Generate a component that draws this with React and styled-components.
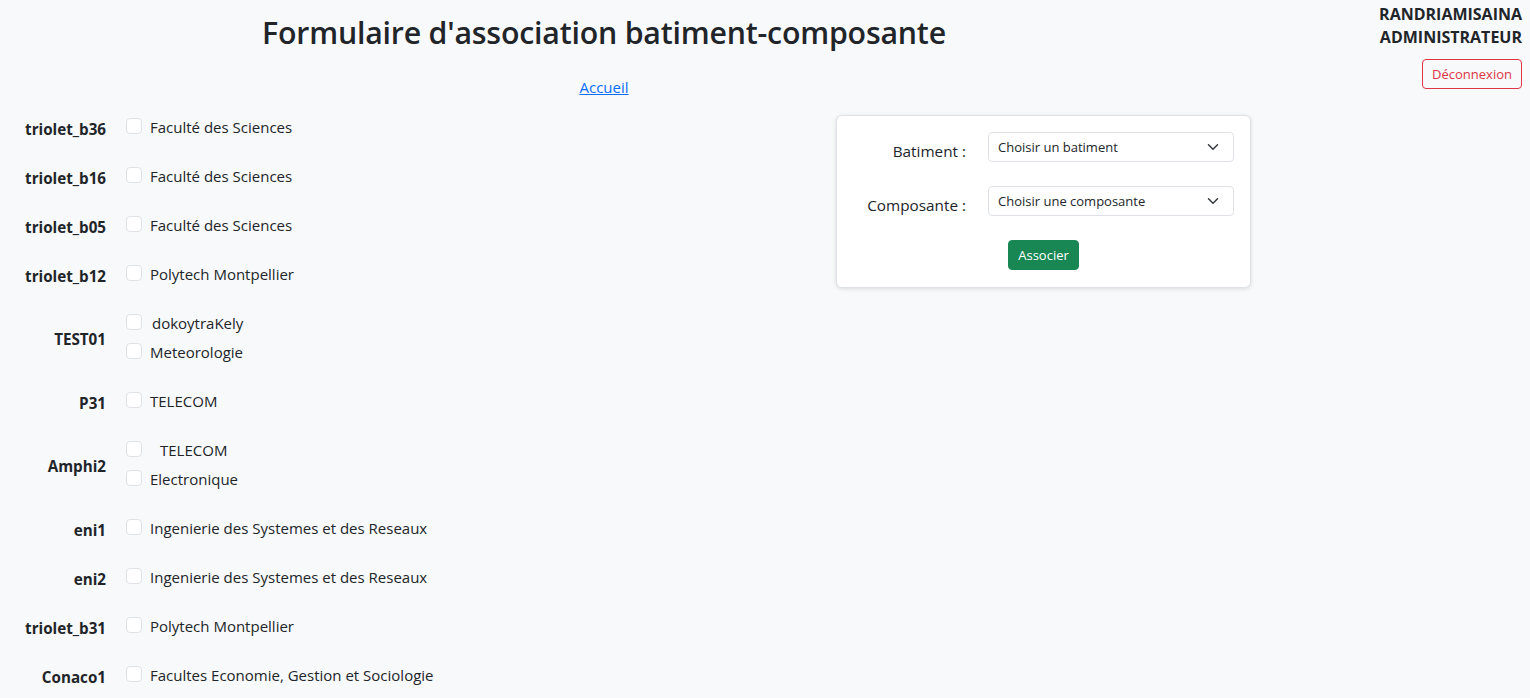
import React from "react";
import styled, { createGlobalStyle } from "styled-components";

const GlobalStyle = createGlobalStyle`
  body {
    margin: 0;
    background: #f8f9fa;
    font-family: "Open Sans", "Noto Sans", sans-serif;
    color: #212529;
  }
`;

const Page = styled.div`
  display: flex;
  width: 1530px;
  min-height: 698px;
`;

const Main = styled.div`
  width: 1208px;
  flex: none;
  display: flex;
  flex-direction: column;
`;

const Title = styled.h2`
  margin: 14px 0 0;
  text-align: center;
  font-size: 30.3px;
  font-weight: 600;
  line-height: 38px;
  letter-spacing: -0.2px;
`;

const HomeLink = styled.a`
  display: block;
  margin-top: 25px;
  text-align: center;
  font-size: 15px;
  color: #0d6efd;
  text-decoration: underline;
`;

const Content = styled.div`
  display: flex;
  margin-top: 15px;
`;

const List = styled.div`
  width: 836px;
  flex: none;
  display: flex;
  flex-direction: column;
  gap: 20px;
`;

const Group = styled.div`
  display: flex;
  align-items: center;
`;

const GroupName = styled.div`
  width: 106px;
  text-align: right;
  font-weight: 700;
  font-size: 15.2px;
  padding-top: 4px;
`;

const Items = styled.div`
  display: flex;
  flex-direction: column;
  margin-left: 20px;
`;

const Item = styled.label`
  display: flex;
  align-items: center;
  height: 29px;
  font-size: 15px;
  gap: ${(p) => p.$gap || 8}px;
`;

const Box = styled.span`
  width: 16px;
  height: 16px;
  flex: none;
  box-sizing: border-box;
  border: 1px solid #dee2e6;
  border-radius: 4px;
  background: #fff;
  margin-top: -2px;
`;

const Card = styled.div`
  width: 415px;
  height: 173px;
  flex: none;
  margin-top: 3px;
  box-sizing: border-box;
  background: #fff;
  border: 1px solid #dee2e6;
  border-radius: 6px;
  box-shadow: 0 1px 4px rgba(0, 0, 0, 0.12);
  padding: 16px 16px 16px 0;
  display: flex;
  flex-direction: column;
  align-items: center;
  gap: 24px;
`;

const Field = styled.div`
  display: flex;
  align-items: center;
  width: 100%;
`;

const FieldLabel = styled.div`
  width: 129px;
  text-align: right;
  font-size: 15.3px;
  padding-top: 8px;
`;

const Select = styled.div`
  margin-left: 22px;
  flex: 1;
  height: 30px;
  box-sizing: border-box;
  border: 1px solid #dee2e6;
  border-radius: 4px;
  background: #fff;
  display: flex;
  align-items: center;
  justify-content: space-between;
  padding: 0 14px 0 9px;
  font-size: 13px;
`;

const Button = styled.button`
  font-family: inherit;
  font-size: 13px;
  border-radius: 4px;
  cursor: pointer;
  height: 30px;
  padding: 0 9px;
  ${(p) =>
    p.$danger
      ? `background: transparent; color: #dc3545; border: 1px solid #dc3545;`
      : `background: #198754; color: #fff; border: 1px solid #198754;`}
`;

const SubmitButton = styled(Button)`
  margin-left: 16px;
`;

const Aside = styled.div`
  flex: 1;
  display: flex;
  flex-direction: column;
  align-items: flex-end;
  padding: 3px 8px 0 0;
`;

const UserLine = styled.div`
  font-weight: 700;
  font-size: 16px;
  line-height: 23px;
`;

const LogoutButton = styled(Button)`
  margin-top: 10px;
`;

const Chevron = () => (
  <svg width="12" height="12" viewBox="0 0 16 16" fill="none">
    <path d="M2 5l6 6 6-6" stroke="#343a40" strokeWidth="2" strokeLinecap="round" strokeLinejoin="round" />
  </svg>
);

const groups = [
  { name: "triolet_b36", items: ["Faculté des Sciences"] },
  { name: "triolet_b16", items: ["Faculté des Sciences"] },
  { name: "triolet_b05", items: ["Faculté des Sciences"] },
  { name: "triolet_b12", items: ["Polytech Montpellier"] },
  { name: "TEST01", items: [{ text: "dokoytraKely", gap: 10 }, "Meteorologie"] },
  { name: "P31", items: ["TELECOM"] },
  { name: "Amphi2", items: [{ text: "TELECOM", gap: 18 }, "Electronique"] },
  { name: "eni1", items: ["Ingenierie des Systemes et des Reseaux"] },
  { name: "eni2", items: ["Ingenierie des Systemes et des Reseaux"] },
  { name: "triolet_b31", items: ["Polytech Montpellier"] },
  { name: "Conaco1", items: ["Facultes Economie, Gestion et Sociologie"] },
];

export default function App() {
  return (
    <>
      <GlobalStyle />
      <Page>
        <Main>
          <Title>Formulaire d'association batiment-composante</Title>
          <HomeLink href="#">Accueil</HomeLink>
          <Content>
            <List>
              {groups.map((g) => (
                <Group key={g.name}>
                  <GroupName>{g.name}</GroupName>
                  <Items>
                    {g.items.map((it, i) => (
                      <Item key={i} $gap={typeof it === "string" ? 8 : it.gap}>
                        <Box />
                        {typeof it === "string" ? it : it.text}
                      </Item>
                    ))}
                  </Items>
                </Group>
              ))}
            </List>
            <Card>
              <Field>
                <FieldLabel>Batiment :</FieldLabel>
                <Select>
                  Choisir un batiment
                  <Chevron />
                </Select>
              </Field>
              <Field>
                <FieldLabel>Composante :</FieldLabel>
                <Select>
                  Choisir une composante
                  <Chevron />
                </Select>
              </Field>
              <SubmitButton>Associer</SubmitButton>
            </Card>
          </Content>
        </Main>
        <Aside>
          <UserLine>RANDRIAMISAINA</UserLine>
          <UserLine>ADMINISTRATEUR</UserLine>
          <LogoutButton $danger>Déconnexion</LogoutButton>
        </Aside>
      </Page>
    </>
  );
}
